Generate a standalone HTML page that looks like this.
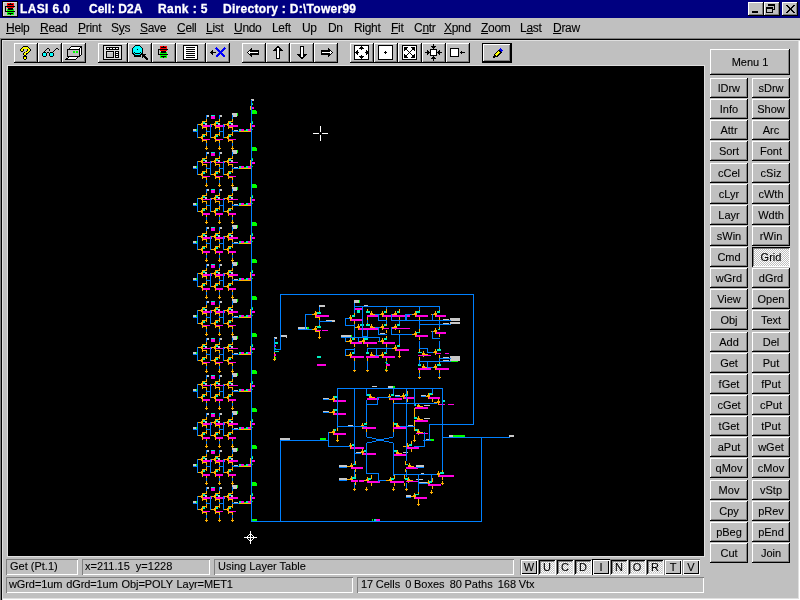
<!DOCTYPE html>
<html><head><meta charset="utf-8">
<style>
*{margin:0;padding:0;box-sizing:border-box}
html,body{width:800px;height:600px;overflow:hidden;background:#c0c0c0;font-family:"Liberation Sans",sans-serif;font-size:11px;color:#000}
.a{position:absolute}
.btn,.mi,.tt,.sb,.sm{will-change:transform}
.btn,.mi,.sb,.sm{-webkit-text-stroke:0.1px #000}
#title{left:0;top:0;width:800px;height:18px;background:#000080}
.tt{position:absolute;top:2px;color:#fff;font:bold 12px "Liberation Sans",sans-serif;white-space:pre;line-height:14px;-webkit-text-stroke:0.3px #fff}
.tb{position:absolute;top:2px;width:16px;height:14px;background:#c0c0c0;box-shadow:inset -1px -1px #000,inset 1px 1px #fff,inset -2px -2px #808080}
.mi{position:absolute;top:21px;white-space:pre;line-height:14px;font-size:12px;letter-spacing:-0.3px}
.mi u{text-decoration:underline 1px;text-underline-offset:1px}
#frame{left:0;top:38px;width:800px;height:562px;box-shadow:inset 1px 1px #808080,inset 2px 2px #000,inset 3px 3px #dfdfdf,inset -1px -1px #fff,inset -2px -2px #dfdfdf}
.btn{position:absolute;background:#c0c0c0;box-shadow:inset -1px -1px #000,inset 1px 1px #fff,inset -2px -2px #808080;text-align:center;white-space:pre}
.rb{width:38px;height:20px;line-height:21px}
.prs{background:conic-gradient(#fff 25%,#c0c0c0 0 50%,#fff 0 75%,#c0c0c0 0) 0 0/2px 2px;box-shadow:inset 1px 1px #000,inset -1px -1px #fff,inset 2px 2px #808080}
.sb{position:absolute;box-shadow:inset 1px 1px #808080,inset -1px -1px #fff;white-space:pre;line-height:14px;padding-left:4px}
.tbtn{position:absolute;top:43px;height:20px}
#canvas{left:8px;top:66px;width:696px;height:490px;background:#000;overflow:hidden;box-shadow:0 0 0 1px #dfdfdf}
.sm{position:absolute;top:559px;width:18px;height:16px;line-height:17px;text-align:center;background:#c0c0c0}
.smr{box-shadow:inset 1px 1px #808080,inset -1px -1px #fff,inset 2px 2px #fff,inset -2px -2px #000}
.smi{box-shadow:inset 1px 1px #000,inset -1px -1px #fff,inset 2px 2px #fff,inset -2px -2px #000}
.smp{background:conic-gradient(#fff 25%,#c0c0c0 0 50%,#fff 0 75%,#c0c0c0 0) 0 0/2px 2px;box-shadow:inset 1px 1px #808080,inset -1px -1px #fff,inset 2px 2px #000,inset -2px -2px #dfdfdf,inset 3px 3px #808080}
</style></head><body>
<div id="title" class="a">
  
  <span class="tt" style="left:20px;letter-spacing:0.35px">LASI 6.0</span>
  <span class="tt" style="left:89px">Cell: D2A</span>
  <span class="tt" style="left:158px;letter-spacing:0.4px">Rank : 5</span>
  <span class="tt" style="left:223px;letter-spacing:0.28px">Directory : D:\Tower99</span>
  <div class="tb" style="left:748px"></div>
  <div class="tb" style="left:764px"></div>
  <div class="tb" style="left:782px"></div>
</div>
<!-- menu -->
<span class="mi" style="left:6px"><u>H</u>elp</span>
<span class="mi" style="left:40px"><u>R</u>ead</span>
<span class="mi" style="left:78px"><u>P</u>rint</span>
<span class="mi" style="left:111px">S<u>y</u>s</span>
<span class="mi" style="left:140px"><u>S</u>ave</span>
<span class="mi" style="left:177px"><u>C</u>ell</span>
<span class="mi" style="left:206px"><u>L</u>ist</span>
<span class="mi" style="left:234px"><u>U</u>ndo</span>
<span class="mi" style="left:272px">Left</span>
<span class="mi" style="left:302px">Up</span>
<span class="mi" style="left:328px">Dn</span>
<span class="mi" style="left:354px">Right</span>
<span class="mi" style="left:391px"><u>F</u>it</span>
<span class="mi" style="left:414px">C<u>n</u>tr</span>
<span class="mi" style="left:444px"><u>X</u>pnd</span>
<span class="mi" style="left:481px"><u>Z</u>oom</span>
<span class="mi" style="left:520px">L<u>a</u>st</span>
<span class="mi" style="left:553px"><u>D</u>raw</span>

<div id="frame" class="a"></div>

<!-- toolbar -->
<div class="btn tbtn" style="left:14px;width:24px"></div>
<div class="btn tbtn" style="left:38px;width:24px"></div>
<div class="btn tbtn" style="left:62px;width:24px"></div>
<div class="btn tbtn" style="left:98px;width:30px"></div>
<div class="btn tbtn" style="left:128px;width:24px"></div>
<div class="btn tbtn" style="left:152px;width:24px"></div>
<div class="btn tbtn" style="left:176px;width:30px"></div>
<div class="btn tbtn" style="left:206px;width:24px"></div>
<div class="btn tbtn" style="left:242px;width:24px"></div>
<div class="btn tbtn" style="left:266px;width:24px"></div>
<div class="btn tbtn" style="left:290px;width:24px"></div>
<div class="btn tbtn" style="left:314px;width:24px"></div>
<div class="btn tbtn" style="left:350px;width:24px"></div>
<div class="btn tbtn" style="left:374px;width:24px"></div>
<div class="btn tbtn" style="left:398px;width:24px"></div>
<div class="btn tbtn" style="left:422px;width:24px"></div>
<div class="btn tbtn" style="left:446px;width:24px"></div>
<div class="btn tbtn" style="left:482px;width:30px;box-shadow:inset 0 0 0 1px #000,inset -2px -2px #000,inset 2px 2px #fff,inset -3px -3px #808080"></div>

<div id="canvas" class="a"></div>
<!--CANVAS--><svg class="a" style="left:0;top:0" width="800" height="600" shape-rendering="crispEdges">
<defs><clipPath id="cc"><rect x="8" y="66" width="696" height="490"/></clipPath></defs><g clip-path="url(#cc)">
<path fill="#ffb000" d="M202 121h1v8h-1zM201 123h1v3h-1zM202 121h5v1h-5zM202 127h5v1h-5zM206 119h1v2h-1zM206 128h1v2h-1zM198 124h4v1h-4zM206 128h1v2h-1zM206 132h1v4h-1zM202 134h1v8h-1zM201 136h1v3h-1zM202 134h5v1h-5zM202 140h5v1h-5zM206 141h1v2h-1zM198 137h4v1h-4zM206 146h1v4h-1zM205 148h3v1h-3zM215 121h1v8h-1zM214 123h1v3h-1zM215 121h5v1h-5zM215 127h5v1h-5zM219 119h1v2h-1zM219 128h1v2h-1zM211 124h4v1h-4zM219 128h1v2h-1zM219 132h1v4h-1zM215 134h1v8h-1zM214 136h1v3h-1zM215 134h5v1h-5zM215 140h5v1h-5zM219 141h1v2h-1zM211 137h4v1h-4zM219 146h1v4h-1zM218 148h3v1h-3zM228 121h1v8h-1zM227 123h1v3h-1zM228 121h5v1h-5zM228 127h5v1h-5zM232 119h1v2h-1zM232 128h1v2h-1zM224 124h4v1h-4zM232 128h1v2h-1zM232 132h1v4h-1zM228 134h1v8h-1zM227 136h1v3h-1zM228 134h5v1h-5zM228 140h5v1h-5zM232 141h1v2h-1zM224 137h4v1h-4zM232 146h1v4h-1zM231 148h3v1h-3zM238 131h14v1h-14zM250 123h1v6h-1zM202 158h1v8h-1zM201 160h1v3h-1zM202 158h5v1h-5zM202 164h5v1h-5zM206 156h1v2h-1zM206 165h1v2h-1zM198 161h4v1h-4zM206 165h1v2h-1zM206 169h1v4h-1zM202 171h1v8h-1zM201 173h1v3h-1zM202 171h5v1h-5zM202 177h5v1h-5zM206 178h1v2h-1zM198 174h4v1h-4zM206 183h1v4h-1zM205 185h3v1h-3zM215 158h1v8h-1zM214 160h1v3h-1zM215 158h5v1h-5zM215 164h5v1h-5zM219 156h1v2h-1zM219 165h1v2h-1zM211 161h4v1h-4zM219 165h1v2h-1zM219 169h1v4h-1zM215 171h1v8h-1zM214 173h1v3h-1zM215 171h5v1h-5zM215 177h5v1h-5zM219 178h1v2h-1zM211 174h4v1h-4zM219 183h1v4h-1zM218 185h3v1h-3zM228 158h1v8h-1zM227 160h1v3h-1zM228 158h5v1h-5zM228 164h5v1h-5zM232 156h1v2h-1zM232 165h1v2h-1zM224 161h4v1h-4zM232 165h1v2h-1zM232 169h1v4h-1zM228 171h1v8h-1zM227 173h1v3h-1zM228 171h5v1h-5zM228 177h5v1h-5zM232 178h1v2h-1zM224 174h4v1h-4zM232 183h1v4h-1zM231 185h3v1h-3zM238 168h14v1h-14zM250 160h1v6h-1zM202 195h1v8h-1zM201 197h1v3h-1zM202 195h5v1h-5zM202 201h5v1h-5zM206 193h1v2h-1zM206 202h1v2h-1zM198 198h4v1h-4zM206 202h1v2h-1zM206 206h1v4h-1zM202 208h1v8h-1zM201 210h1v3h-1zM202 208h5v1h-5zM202 214h5v1h-5zM206 215h1v2h-1zM198 211h4v1h-4zM206 220h1v4h-1zM205 222h3v1h-3zM215 195h1v8h-1zM214 197h1v3h-1zM215 195h5v1h-5zM215 201h5v1h-5zM219 193h1v2h-1zM219 202h1v2h-1zM211 198h4v1h-4zM219 202h1v2h-1zM219 206h1v4h-1zM215 208h1v8h-1zM214 210h1v3h-1zM215 208h5v1h-5zM215 214h5v1h-5zM219 215h1v2h-1zM211 211h4v1h-4zM219 220h1v4h-1zM218 222h3v1h-3zM228 195h1v8h-1zM227 197h1v3h-1zM228 195h5v1h-5zM228 201h5v1h-5zM232 193h1v2h-1zM232 202h1v2h-1zM224 198h4v1h-4zM232 202h1v2h-1zM232 206h1v4h-1zM228 208h1v8h-1zM227 210h1v3h-1zM228 208h5v1h-5zM228 214h5v1h-5zM232 215h1v2h-1zM224 211h4v1h-4zM232 220h1v4h-1zM231 222h3v1h-3zM238 205h14v1h-14zM250 197h1v6h-1zM202 233h1v8h-1zM201 235h1v3h-1zM202 233h5v1h-5zM202 239h5v1h-5zM206 231h1v2h-1zM206 240h1v2h-1zM198 236h4v1h-4zM206 240h1v2h-1zM206 244h1v4h-1zM202 246h1v8h-1zM201 248h1v3h-1zM202 246h5v1h-5zM202 252h5v1h-5zM206 253h1v2h-1zM198 249h4v1h-4zM206 258h1v4h-1zM205 260h3v1h-3zM215 233h1v8h-1zM214 235h1v3h-1zM215 233h5v1h-5zM215 239h5v1h-5zM219 231h1v2h-1zM219 240h1v2h-1zM211 236h4v1h-4zM219 240h1v2h-1zM219 244h1v4h-1zM215 246h1v8h-1zM214 248h1v3h-1zM215 246h5v1h-5zM215 252h5v1h-5zM219 253h1v2h-1zM211 249h4v1h-4zM219 258h1v4h-1zM218 260h3v1h-3zM228 233h1v8h-1zM227 235h1v3h-1zM228 233h5v1h-5zM228 239h5v1h-5zM232 231h1v2h-1zM232 240h1v2h-1zM224 236h4v1h-4zM232 240h1v2h-1zM232 244h1v4h-1zM228 246h1v8h-1zM227 248h1v3h-1zM228 246h5v1h-5zM228 252h5v1h-5zM232 253h1v2h-1zM224 249h4v1h-4zM232 258h1v4h-1zM231 260h3v1h-3zM238 243h14v1h-14zM250 235h1v6h-1zM202 270h1v8h-1zM201 272h1v3h-1zM202 270h5v1h-5zM202 276h5v1h-5zM206 268h1v2h-1zM206 277h1v2h-1zM198 273h4v1h-4zM206 277h1v2h-1zM206 281h1v4h-1zM202 283h1v8h-1zM201 285h1v3h-1zM202 283h5v1h-5zM202 289h5v1h-5zM206 290h1v2h-1zM198 286h4v1h-4zM206 295h1v4h-1zM205 297h3v1h-3zM215 270h1v8h-1zM214 272h1v3h-1zM215 270h5v1h-5zM215 276h5v1h-5zM219 268h1v2h-1zM219 277h1v2h-1zM211 273h4v1h-4zM219 277h1v2h-1zM219 281h1v4h-1zM215 283h1v8h-1zM214 285h1v3h-1zM215 283h5v1h-5zM215 289h5v1h-5zM219 290h1v2h-1zM211 286h4v1h-4zM219 295h1v4h-1zM218 297h3v1h-3zM228 270h1v8h-1zM227 272h1v3h-1zM228 270h5v1h-5zM228 276h5v1h-5zM232 268h1v2h-1zM232 277h1v2h-1zM224 273h4v1h-4zM232 277h1v2h-1zM232 281h1v4h-1zM228 283h1v8h-1zM227 285h1v3h-1zM228 283h5v1h-5zM228 289h5v1h-5zM232 290h1v2h-1zM224 286h4v1h-4zM232 295h1v4h-1zM231 297h3v1h-3zM238 280h14v1h-14zM250 272h1v6h-1zM202 307h1v8h-1zM201 309h1v3h-1zM202 307h5v1h-5zM202 313h5v1h-5zM206 305h1v2h-1zM206 314h1v2h-1zM198 310h4v1h-4zM206 314h1v2h-1zM206 318h1v4h-1zM202 320h1v8h-1zM201 322h1v3h-1zM202 320h5v1h-5zM202 326h5v1h-5zM206 327h1v2h-1zM198 323h4v1h-4zM206 332h1v4h-1zM205 334h3v1h-3zM215 307h1v8h-1zM214 309h1v3h-1zM215 307h5v1h-5zM215 313h5v1h-5zM219 305h1v2h-1zM219 314h1v2h-1zM211 310h4v1h-4zM219 314h1v2h-1zM219 318h1v4h-1zM215 320h1v8h-1zM214 322h1v3h-1zM215 320h5v1h-5zM215 326h5v1h-5zM219 327h1v2h-1zM211 323h4v1h-4zM219 332h1v4h-1zM218 334h3v1h-3zM228 307h1v8h-1zM227 309h1v3h-1zM228 307h5v1h-5zM228 313h5v1h-5zM232 305h1v2h-1zM232 314h1v2h-1zM224 310h4v1h-4zM232 314h1v2h-1zM232 318h1v4h-1zM228 320h1v8h-1zM227 322h1v3h-1zM228 320h5v1h-5zM228 326h5v1h-5zM232 327h1v2h-1zM224 323h4v1h-4zM232 332h1v4h-1zM231 334h3v1h-3zM238 317h14v1h-14zM250 309h1v6h-1zM202 344h1v8h-1zM201 346h1v3h-1zM202 344h5v1h-5zM202 350h5v1h-5zM206 342h1v2h-1zM206 351h1v2h-1zM198 347h4v1h-4zM206 351h1v2h-1zM206 355h1v4h-1zM202 357h1v8h-1zM201 359h1v3h-1zM202 357h5v1h-5zM202 363h5v1h-5zM206 364h1v2h-1zM198 360h4v1h-4zM206 369h1v4h-1zM205 371h3v1h-3zM215 344h1v8h-1zM214 346h1v3h-1zM215 344h5v1h-5zM215 350h5v1h-5zM219 342h1v2h-1zM219 351h1v2h-1zM211 347h4v1h-4zM219 351h1v2h-1zM219 355h1v4h-1zM215 357h1v8h-1zM214 359h1v3h-1zM215 357h5v1h-5zM215 363h5v1h-5zM219 364h1v2h-1zM211 360h4v1h-4zM219 369h1v4h-1zM218 371h3v1h-3zM228 344h1v8h-1zM227 346h1v3h-1zM228 344h5v1h-5zM228 350h5v1h-5zM232 342h1v2h-1zM232 351h1v2h-1zM224 347h4v1h-4zM232 351h1v2h-1zM232 355h1v4h-1zM228 357h1v8h-1zM227 359h1v3h-1zM228 357h5v1h-5zM228 363h5v1h-5zM232 364h1v2h-1zM224 360h4v1h-4zM232 369h1v4h-1zM231 371h3v1h-3zM238 354h14v1h-14zM250 346h1v6h-1zM202 381h1v8h-1zM201 383h1v3h-1zM202 381h5v1h-5zM202 387h5v1h-5zM206 379h1v2h-1zM206 388h1v2h-1zM198 384h4v1h-4zM206 388h1v2h-1zM206 392h1v4h-1zM202 394h1v8h-1zM201 396h1v3h-1zM202 394h5v1h-5zM202 400h5v1h-5zM206 401h1v2h-1zM198 397h4v1h-4zM206 406h1v4h-1zM205 408h3v1h-3zM215 381h1v8h-1zM214 383h1v3h-1zM215 381h5v1h-5zM215 387h5v1h-5zM219 379h1v2h-1zM219 388h1v2h-1zM211 384h4v1h-4zM219 388h1v2h-1zM219 392h1v4h-1zM215 394h1v8h-1zM214 396h1v3h-1zM215 394h5v1h-5zM215 400h5v1h-5zM219 401h1v2h-1zM211 397h4v1h-4zM219 406h1v4h-1zM218 408h3v1h-3zM228 381h1v8h-1zM227 383h1v3h-1zM228 381h5v1h-5zM228 387h5v1h-5zM232 379h1v2h-1zM232 388h1v2h-1zM224 384h4v1h-4zM232 388h1v2h-1zM232 392h1v4h-1zM228 394h1v8h-1zM227 396h1v3h-1zM228 394h5v1h-5zM228 400h5v1h-5zM232 401h1v2h-1zM224 397h4v1h-4zM232 406h1v4h-1zM231 408h3v1h-3zM238 391h14v1h-14zM250 383h1v6h-1zM202 419h1v8h-1zM201 421h1v3h-1zM202 419h5v1h-5zM202 425h5v1h-5zM206 417h1v2h-1zM206 426h1v2h-1zM198 422h4v1h-4zM206 426h1v2h-1zM206 430h1v4h-1zM202 432h1v8h-1zM201 434h1v3h-1zM202 432h5v1h-5zM202 438h5v1h-5zM206 439h1v2h-1zM198 435h4v1h-4zM206 444h1v4h-1zM205 446h3v1h-3zM215 419h1v8h-1zM214 421h1v3h-1zM215 419h5v1h-5zM215 425h5v1h-5zM219 417h1v2h-1zM219 426h1v2h-1zM211 422h4v1h-4zM219 426h1v2h-1zM219 430h1v4h-1zM215 432h1v8h-1zM214 434h1v3h-1zM215 432h5v1h-5zM215 438h5v1h-5zM219 439h1v2h-1zM211 435h4v1h-4zM219 444h1v4h-1zM218 446h3v1h-3zM228 419h1v8h-1zM227 421h1v3h-1zM228 419h5v1h-5zM228 425h5v1h-5zM232 417h1v2h-1zM232 426h1v2h-1zM224 422h4v1h-4zM232 426h1v2h-1zM232 430h1v4h-1zM228 432h1v8h-1zM227 434h1v3h-1zM228 432h5v1h-5zM228 438h5v1h-5zM232 439h1v2h-1zM224 435h4v1h-4zM232 444h1v4h-1zM231 446h3v1h-3zM238 429h14v1h-14zM250 421h1v6h-1zM202 456h1v8h-1zM201 458h1v3h-1zM202 456h5v1h-5zM202 462h5v1h-5zM206 454h1v2h-1zM206 463h1v2h-1zM198 459h4v1h-4zM206 463h1v2h-1zM206 467h1v4h-1zM202 469h1v8h-1zM201 471h1v3h-1zM202 469h5v1h-5zM202 475h5v1h-5zM206 476h1v2h-1zM198 472h4v1h-4zM206 481h1v4h-1zM205 483h3v1h-3zM215 456h1v8h-1zM214 458h1v3h-1zM215 456h5v1h-5zM215 462h5v1h-5zM219 454h1v2h-1zM219 463h1v2h-1zM211 459h4v1h-4zM219 463h1v2h-1zM219 467h1v4h-1zM215 469h1v8h-1zM214 471h1v3h-1zM215 469h5v1h-5zM215 475h5v1h-5zM219 476h1v2h-1zM211 472h4v1h-4zM219 481h1v4h-1zM218 483h3v1h-3zM228 456h1v8h-1zM227 458h1v3h-1zM228 456h5v1h-5zM228 462h5v1h-5zM232 454h1v2h-1zM232 463h1v2h-1zM224 459h4v1h-4zM232 463h1v2h-1zM232 467h1v4h-1zM228 469h1v8h-1zM227 471h1v3h-1zM228 469h5v1h-5zM228 475h5v1h-5zM232 476h1v2h-1zM224 472h4v1h-4zM232 481h1v4h-1zM231 483h3v1h-3zM238 466h14v1h-14zM250 458h1v6h-1zM202 493h1v8h-1zM201 495h1v3h-1zM202 493h5v1h-5zM202 499h5v1h-5zM206 491h1v2h-1zM206 500h1v2h-1zM198 496h4v1h-4zM206 500h1v2h-1zM206 504h1v4h-1zM202 506h1v8h-1zM201 508h1v3h-1zM202 506h5v1h-5zM202 512h5v1h-5zM206 513h1v2h-1zM198 509h4v1h-4zM206 518h1v4h-1zM205 520h3v1h-3zM215 493h1v8h-1zM214 495h1v3h-1zM215 493h5v1h-5zM215 499h5v1h-5zM219 491h1v2h-1zM219 500h1v2h-1zM211 496h4v1h-4zM219 500h1v2h-1zM219 504h1v4h-1zM215 506h1v8h-1zM214 508h1v3h-1zM215 506h5v1h-5zM215 512h5v1h-5zM219 513h1v2h-1zM211 509h4v1h-4zM219 518h1v4h-1zM218 520h3v1h-3zM228 493h1v8h-1zM227 495h1v3h-1zM228 493h5v1h-5zM228 499h5v1h-5zM232 491h1v2h-1zM232 500h1v2h-1zM224 496h4v1h-4zM232 500h1v2h-1zM232 504h1v4h-1zM228 506h1v8h-1zM227 508h1v3h-1zM228 506h5v1h-5zM228 512h5v1h-5zM232 513h1v2h-1zM224 509h4v1h-4zM232 518h1v4h-1zM231 520h3v1h-3zM238 503h14v1h-14zM250 495h1v6h-1zM250 106h1v4h-1zM274 344h1v1h-1zM274 352h1v2h-1zM274 356h1v1h-1zM274 357h1v4h-1zM273 359h3v1h-3zM319 310h1v2h-1zM319 334h1v2h-1zM319 335h1v4h-1zM318 337h3v1h-3zM386 366h1v3h-1zM315 311h1v6h-1zM314 313h3v2h-3zM311 314h4v1h-4zM319 309h1v4h-1zM319 317h1v4h-1zM315 326h1v6h-1zM314 328h3v2h-3zM311 329h4v1h-4zM319 324h1v3h-1zM319 332h1v5h-1zM315 312h5v1h-5zM315 317h5v1h-5zM315 326h5v1h-5zM315 331h5v1h-5zM350 315h1v6h-1zM349 317h3v2h-3zM346 318h4v1h-4zM354 313h1v4h-1zM354 321h1v3h-1zM371 311h1v6h-1zM370 313h3v2h-3zM372 314h4v1h-4zM367 309h1v4h-1zM367 317h1v3h-1zM382 311h1v6h-1zM381 313h3v2h-3zM378 314h4v1h-4zM386 309h1v4h-1zM386 317h1v3h-1zM395 311h1v6h-1zM394 313h3v2h-3zM391 314h4v1h-4zM399 309h1v4h-1zM399 317h1v3h-1zM415 311h1v6h-1zM414 313h3v2h-3zM411 314h4v1h-4zM419 309h1v4h-1zM419 317h1v3h-1zM435 311h1v6h-1zM434 313h3v2h-3zM431 314h4v1h-4zM439 309h1v4h-1zM439 317h1v3h-1zM358 324h1v6h-1zM357 326h3v2h-3zM354 327h4v1h-4zM362 322h1v4h-1zM362 330h1v3h-1zM371 324h1v6h-1zM370 326h3v2h-3zM372 327h4v1h-4zM367 322h1v4h-1zM367 330h1v3h-1zM382 324h1v6h-1zM381 326h3v2h-3zM378 327h4v1h-4zM386 322h1v4h-1zM386 330h1v3h-1zM395 324h1v6h-1zM394 326h3v2h-3zM391 327h4v1h-4zM399 322h1v4h-1zM399 330h1v3h-1zM415 331h1v6h-1zM414 333h3v2h-3zM411 334h4v1h-4zM419 329h1v4h-1zM419 337h1v3h-1zM435 328h1v6h-1zM434 330h3v2h-3zM431 331h4v1h-4zM439 326h1v4h-1zM439 334h1v3h-1zM350 338h1v6h-1zM349 340h3v2h-3zM346 341h4v1h-4zM354 336h1v4h-1zM354 344h1v3h-1zM363 338h1v6h-1zM362 340h3v2h-3zM359 341h4v1h-4zM367 336h1v4h-1zM367 344h1v3h-1zM382 338h1v6h-1zM381 340h3v2h-3zM378 341h4v1h-4zM386 336h1v4h-1zM386 344h1v3h-1zM395 345h1v6h-1zM394 347h3v2h-3zM391 348h4v1h-4zM399 343h1v4h-1zM399 351h1v5h-1zM350 352h1v6h-1zM349 354h3v2h-3zM346 355h4v1h-4zM354 350h1v4h-1zM354 358h1v3h-1zM371 352h1v6h-1zM370 354h3v2h-3zM372 355h4v1h-4zM367 350h1v4h-1zM367 358h1v3h-1zM382 352h1v6h-1zM381 354h3v2h-3zM378 355h4v1h-4zM386 350h1v4h-1zM386 358h1v3h-1zM423 351h1v6h-1zM422 353h3v2h-3zM424 354h4v1h-4zM419 349h1v4h-1zM419 357h1v3h-1zM435 349h1v6h-1zM434 351h3v2h-3zM431 352h4v1h-4zM439 347h1v4h-1zM439 355h1v3h-1zM423 364h1v6h-1zM422 366h3v2h-3zM424 367h4v1h-4zM419 362h1v4h-1zM419 370h1v3h-1zM435 364h1v6h-1zM434 366h3v2h-3zM431 367h4v1h-4zM439 362h1v4h-1zM439 370h1v3h-1zM354 368h1v4h-1zM353 370h3v1h-3zM367 368h1v4h-1zM366 370h3v1h-3zM386 368h1v4h-1zM385 370h3v1h-3zM419 375h1v4h-1zM418 377h3v1h-3zM439 375h1v4h-1zM438 377h3v1h-3zM399 354h1v4h-1zM398 356h3v1h-3zM414 408h1v9h-1zM414 420h1v9h-1zM393 421h1v8h-1zM333 396h1v6h-1zM332 398h3v2h-3zM329 399h4v1h-4zM337 394h1v4h-1zM337 402h1v3h-1zM333 409h1v6h-1zM332 411h3v2h-3zM329 412h4v1h-4zM337 407h1v4h-1zM337 415h1v3h-1zM333 429h1v6h-1zM332 431h3v2h-3zM329 432h4v1h-4zM337 427h1v4h-1zM337 435h1v3h-1zM350 443h1v6h-1zM349 445h3v2h-3zM346 446h4v1h-4zM354 441h1v4h-1zM354 449h1v3h-1zM362 449h1v6h-1zM361 451h3v2h-3zM358 452h4v1h-4zM366 447h1v4h-1zM366 455h1v3h-1zM370 394h1v6h-1zM369 396h3v2h-3zM371 397h4v1h-4zM366 392h1v4h-1zM366 400h1v3h-1zM362 423h1v6h-1zM361 425h3v2h-3zM358 426h4v1h-4zM366 421h1v4h-1zM366 429h1v3h-1zM389 394h1v6h-1zM388 396h3v2h-3zM385 397h4v1h-4zM393 392h1v4h-1zM393 400h1v3h-1zM403 393h1v6h-1zM402 395h3v2h-3zM399 396h4v1h-4zM407 391h1v4h-1zM407 399h1v3h-1zM428 393h1v6h-1zM427 395h3v2h-3zM424 396h4v1h-4zM432 391h1v4h-1zM432 399h1v3h-1zM438 399h1v6h-1zM437 401h3v2h-3zM434 402h4v1h-4zM442 397h1v4h-1zM442 405h1v3h-1zM418 403h1v6h-1zM417 405h3v2h-3zM419 406h4v1h-4zM414 401h1v4h-1zM414 409h1v3h-1zM418 416h1v6h-1zM417 418h3v2h-3zM419 419h4v1h-4zM414 414h1v4h-1zM414 422h1v3h-1zM418 429h1v6h-1zM417 431h3v2h-3zM419 432h4v1h-4zM414 427h1v4h-1zM414 435h1v3h-1zM397 423h1v6h-1zM396 425h3v2h-3zM398 426h4v1h-4zM393 421h1v4h-1zM393 429h1v3h-1zM397 450h1v6h-1zM396 452h3v2h-3zM398 453h4v1h-4zM393 448h1v4h-1zM393 456h1v3h-1zM407 443h1v6h-1zM406 445h3v2h-3zM403 446h4v1h-4zM411 441h1v4h-1zM411 449h1v3h-1zM351 463h1v6h-1zM350 465h3v2h-3zM347 466h4v1h-4zM355 461h1v4h-1zM355 469h1v3h-1zM351 476h1v6h-1zM350 478h3v2h-3zM347 479h4v1h-4zM355 474h1v4h-1zM355 482h1v3h-1zM367 477h1v6h-1zM366 479h3v2h-3zM363 480h4v1h-4zM371 475h1v4h-1zM371 483h1v3h-1zM390 477h1v6h-1zM389 479h3v2h-3zM386 480h4v1h-4zM394 475h1v4h-1zM394 483h1v3h-1zM408 477h1v6h-1zM407 479h3v2h-3zM409 480h4v1h-4zM404 475h1v4h-1zM404 483h1v3h-1zM409 463h1v6h-1zM408 465h3v2h-3zM410 466h4v1h-4zM405 461h1v4h-1zM405 469h1v3h-1zM438 471h1v6h-1zM437 473h3v2h-3zM434 474h4v1h-4zM442 469h1v4h-1zM442 477h1v3h-1zM428 480h1v6h-1zM427 482h3v2h-3zM424 483h4v1h-4zM432 478h1v4h-1zM432 486h1v3h-1zM414 493h1v6h-1zM413 495h3v2h-3zM410 496h4v1h-4zM418 491h1v4h-1zM418 499h1v3h-1zM337 438h1v4h-1zM336 440h3v1h-3zM354 487h1v4h-1zM353 489h3v1h-3zM366 487h1v4h-1zM365 489h3v1h-3zM393 487h1v4h-1zM392 489h3v1h-3zM406 487h1v4h-1zM405 489h3v1h-3zM442 481h1v4h-1zM441 483h3v1h-3zM431 490h1v4h-1zM430 492h3v1h-3zM418 502h1v4h-1zM417 504h3v1h-3zM414 438h1v4h-1zM413 440h3v1h-3zM372 521h8v1h-8z"/>
<path fill="#ff00e0" d="M203 125h9v2h-9zM203 139h7v1h-7zM216 125h9v2h-9zM216 139h7v1h-7zM229 125h9v2h-9zM229 139h7v1h-7zM211 116h4v3h-4zM241 129h3v2h-3zM248 129h3v2h-3zM251 125h4v2h-4zM203 162h9v1h-9zM203 176h7v1h-7zM216 162h9v1h-9zM216 176h7v1h-7zM229 162h9v1h-9zM229 176h7v1h-7zM211 153h4v3h-4zM241 166h3v2h-3zM248 166h3v2h-3zM251 162h4v2h-4zM203 199h9v1h-9zM203 213h7v2h-7zM216 199h9v1h-9zM216 213h7v2h-7zM229 199h9v1h-9zM229 213h7v2h-7zM211 190h4v3h-4zM241 203h3v2h-3zM248 203h3v2h-3zM251 199h4v2h-4zM203 237h9v2h-9zM203 251h7v2h-7zM216 237h9v2h-9zM216 251h7v2h-7zM229 237h9v2h-9zM229 251h7v2h-7zM211 228h4v3h-4zM241 241h3v2h-3zM248 241h3v2h-3zM251 237h4v2h-4zM203 274h9v2h-9zM203 288h7v2h-7zM216 274h9v2h-9zM216 288h7v2h-7zM229 274h9v2h-9zM229 288h7v2h-7zM211 265h4v3h-4zM241 278h3v2h-3zM248 278h3v2h-3zM251 274h4v2h-4zM203 311h9v2h-9zM203 325h7v1h-7zM216 311h9v2h-9zM216 325h7v1h-7zM229 311h9v2h-9zM229 325h7v1h-7zM211 302h4v3h-4zM241 315h3v2h-3zM248 315h3v2h-3zM251 311h4v2h-4zM203 348h9v1h-9zM203 362h7v1h-7zM216 348h9v1h-9zM216 362h7v1h-7zM229 348h9v1h-9zM229 362h7v1h-7zM211 339h4v3h-4zM241 352h3v2h-3zM248 352h3v2h-3zM251 348h4v2h-4zM203 385h9v1h-9zM203 399h7v2h-7zM216 385h9v1h-9zM216 399h7v2h-7zM229 385h9v1h-9zM229 399h7v2h-7zM211 376h4v3h-4zM241 389h3v2h-3zM248 389h3v2h-3zM251 385h4v2h-4zM203 423h9v2h-9zM203 437h7v2h-7zM216 423h9v2h-9zM216 437h7v2h-7zM229 423h9v2h-9zM229 437h7v2h-7zM211 414h4v3h-4zM241 427h3v2h-3zM248 427h3v2h-3zM251 423h4v2h-4zM203 460h9v2h-9zM203 474h7v2h-7zM216 460h9v2h-9zM216 474h7v2h-7zM229 460h9v2h-9zM229 474h7v2h-7zM211 451h4v3h-4zM241 464h3v2h-3zM248 464h3v2h-3zM251 460h4v2h-4zM203 497h9v2h-9zM203 511h7v1h-7zM216 497h9v2h-9zM216 511h7v1h-7zM229 497h9v2h-9zM229 511h7v1h-7zM211 488h4v3h-4zM241 501h3v2h-3zM248 501h3v2h-3zM251 497h4v2h-4zM251 107h3v2h-3zM274 345h2v2h-2zM274 354h2v2h-2zM322 330h6v1h-6zM317 364h9v2h-9zM355 308h8v2h-8zM386 364h4v2h-4zM406 315h3v2h-3zM405 328h3v1h-3zM405 349h3v2h-3zM316 315h13v2h-13zM316 330h5v1h-5zM351 319h12v2h-12zM367 315h12v2h-12zM383 315h8v2h-8zM392 315h18v2h-18zM416 315h12v2h-12zM436 315h10v2h-10zM359 328h12v2h-12zM367 328h11v2h-11zM383 328h6v1h-6zM392 328h18v1h-18zM416 335h12v2h-12zM436 332h10v2h-10zM351 342h11v2h-11zM364 342h13v2h-13zM383 342h12v2h-12zM396 349h13v2h-13zM351 356h13v2h-13zM366 356h13v2h-13zM383 356h12v2h-12zM418 355h13v1h-13zM436 353h5v1h-5zM445 353h4v1h-4zM418 368h13v2h-13zM436 368h13v2h-13zM410 447h9v2h-9zM410 467h8v2h-8zM334 400h12v2h-12zM334 413h12v2h-12zM334 433h12v2h-12zM351 447h13v2h-13zM363 453h13v2h-13zM367 398h12v2h-12zM363 427h13v2h-13zM390 398h12v2h-12zM404 397h11v2h-11zM429 397h11v2h-11zM439 404h6v1h-6zM448 404h4v1h-4zM452 404h2v1h-2zM415 407h13v2h-13zM415 420h13v2h-13zM416 433h12v1h-12zM393 427h14v2h-14zM393 454h13v2h-13zM406 447h12v2h-12zM351 467h12v2h-12zM351 480h7v2h-7zM359 480h5v2h-5zM367 481h13v2h-13zM390 481h14v2h-14zM406 481h8v1h-8zM414 481h5v1h-5zM406 467h12v2h-12zM439 475h15v2h-15zM428 484h13v2h-13zM415 497h12v2h-12zM376 519h4v2h-4z"/>
<path fill="#00f0c0" d="M203 122h2v2h-2zM203 135h2v2h-2zM216 122h2v2h-2zM216 135h2v2h-2zM229 122h2v2h-2zM229 135h2v2h-2zM211 115h4v1h-4zM239 129h2v2h-2zM246 129h2v2h-2zM251 122h2v2h-2zM203 159h2v2h-2zM203 172h2v2h-2zM216 159h2v2h-2zM216 172h2v2h-2zM229 159h2v2h-2zM229 172h2v2h-2zM211 152h4v1h-4zM239 166h2v2h-2zM246 166h2v2h-2zM251 159h2v2h-2zM203 196h2v2h-2zM203 209h2v2h-2zM216 196h2v2h-2zM216 209h2v2h-2zM229 196h2v2h-2zM229 209h2v2h-2zM211 189h4v1h-4zM239 203h2v2h-2zM246 203h2v2h-2zM251 196h2v2h-2zM203 234h2v2h-2zM203 247h2v2h-2zM216 234h2v2h-2zM216 247h2v2h-2zM229 234h2v2h-2zM229 247h2v2h-2zM211 227h4v1h-4zM239 241h2v2h-2zM246 241h2v2h-2zM251 234h2v2h-2zM203 271h2v2h-2zM203 284h2v2h-2zM216 271h2v2h-2zM216 284h2v2h-2zM229 271h2v2h-2zM229 284h2v2h-2zM211 264h4v1h-4zM239 278h2v2h-2zM246 278h2v2h-2zM251 271h2v2h-2zM203 308h2v2h-2zM203 321h2v2h-2zM216 308h2v2h-2zM216 321h2v2h-2zM229 308h2v2h-2zM229 321h2v2h-2zM211 301h4v1h-4zM239 315h2v2h-2zM246 315h2v2h-2zM251 308h2v2h-2zM203 345h2v2h-2zM203 358h2v2h-2zM216 345h2v2h-2zM216 358h2v2h-2zM229 345h2v2h-2zM229 358h2v2h-2zM211 338h4v1h-4zM239 352h2v2h-2zM246 352h2v2h-2zM251 345h2v2h-2zM203 382h2v2h-2zM203 395h2v2h-2zM216 382h2v2h-2zM216 395h2v2h-2zM229 382h2v2h-2zM229 395h2v2h-2zM211 375h4v1h-4zM239 389h2v2h-2zM246 389h2v2h-2zM251 382h2v2h-2zM203 420h2v2h-2zM203 433h2v2h-2zM216 420h2v2h-2zM216 433h2v2h-2zM229 420h2v2h-2zM229 433h2v2h-2zM211 413h4v1h-4zM239 427h2v2h-2zM246 427h2v2h-2zM251 420h2v2h-2zM203 457h2v2h-2zM203 470h2v2h-2zM216 457h2v2h-2zM216 470h2v2h-2zM229 457h2v2h-2zM229 470h2v2h-2zM211 450h4v1h-4zM239 464h2v2h-2zM246 464h2v2h-2zM251 457h2v2h-2zM203 494h2v2h-2zM203 507h2v2h-2zM216 494h2v2h-2zM216 507h2v2h-2zM229 494h2v2h-2zM229 507h2v2h-2zM211 487h4v1h-4zM239 501h2v2h-2zM246 501h2v2h-2zM251 494h2v2h-2zM251 103h2v2h-2zM274 342h4v2h-4zM275 351h4v1h-4zM317 356h4v2h-4zM357 310h3v3h-3zM386 363h2v1h-2zM317 312h4v2h-4zM317 326h4v2h-4zM352 315h3v2h-3zM366 311h4v2h-4zM384 311h2v2h-2zM397 311h2v2h-2zM416 311h4v2h-4zM437 311h3v2h-3zM360 324h4v2h-4zM366 324h4v2h-4zM384 324h2v2h-2zM397 324h3v2h-3zM416 332h4v1h-4zM438 329h2v1h-2zM352 338h2v2h-2zM364 338h4v2h-4zM384 338h3v2h-3zM397 345h3v2h-3zM352 352h3v2h-3zM366 352h3v2h-3zM384 352h2v2h-2zM418 352h4v1h-4zM437 349h4v2h-4zM418 364h3v2h-3zM437 364h4v2h-4zM334 396h3v2h-3zM334 409h3v2h-3zM334 429h2v2h-2zM352 444h3v2h-3zM364 450h3v2h-3zM367 394h3v2h-3zM364 423h3v2h-3zM391 394h3v2h-3zM405 394h3v2h-3zM429 393h3v2h-3zM442 400h3v2h-3zM414 404h2v2h-2zM414 417h3v2h-3zM415 429h3v2h-3zM394 423h3v2h-3zM394 450h3v2h-3zM409 444h3v2h-3zM353 464h3v1h-3zM352 477h4v2h-4zM368 478h3v2h-3zM391 478h3v2h-3zM405 478h3v2h-3zM406 464h2v1h-2zM440 472h4v2h-4zM429 481h3v2h-3zM415 494h4v1h-4zM374 519h2v2h-2z"/>
<path fill="#c8c8c8" d="M193 129h3v2h-3zM207 115h2v2h-2zM205 123h2v2h-2zM220 115h2v2h-2zM218 123h2v2h-2zM233 115h2v2h-2zM231 123h2v2h-2zM232 113h5v4h-5zM234 130h4v1h-4zM193 166h3v2h-3zM207 152h2v2h-2zM205 160h2v2h-2zM220 152h2v2h-2zM218 160h2v2h-2zM233 152h2v2h-2zM231 160h2v2h-2zM232 150h5v4h-5zM234 167h4v1h-4zM193 203h3v2h-3zM207 189h2v2h-2zM205 197h2v2h-2zM220 189h2v2h-2zM218 197h2v2h-2zM233 189h2v2h-2zM231 197h2v2h-2zM232 187h5v4h-5zM234 204h4v1h-4zM193 241h3v2h-3zM207 227h2v2h-2zM205 235h2v2h-2zM220 227h2v2h-2zM218 235h2v2h-2zM233 227h2v2h-2zM231 235h2v2h-2zM232 225h5v4h-5zM234 242h4v1h-4zM193 278h3v2h-3zM207 264h2v2h-2zM205 272h2v2h-2zM220 264h2v2h-2zM218 272h2v2h-2zM233 264h2v2h-2zM231 272h2v2h-2zM232 262h5v4h-5zM234 279h4v1h-4zM193 315h3v2h-3zM207 301h2v2h-2zM205 309h2v2h-2zM220 301h2v2h-2zM218 309h2v2h-2zM233 301h2v2h-2zM231 309h2v2h-2zM232 299h5v4h-5zM234 316h4v1h-4zM193 352h3v2h-3zM207 338h2v2h-2zM205 346h2v2h-2zM220 338h2v2h-2zM218 346h2v2h-2zM233 338h2v2h-2zM231 346h2v2h-2zM232 336h5v4h-5zM234 353h4v1h-4zM193 389h3v2h-3zM207 375h2v2h-2zM205 383h2v2h-2zM220 375h2v2h-2zM218 383h2v2h-2zM233 375h2v2h-2zM231 383h2v2h-2zM232 373h5v4h-5zM234 390h4v1h-4zM193 427h3v2h-3zM207 413h2v2h-2zM205 421h2v2h-2zM220 413h2v2h-2zM218 421h2v2h-2zM233 413h2v2h-2zM231 421h2v2h-2zM232 411h5v4h-5zM234 428h4v1h-4zM193 464h3v2h-3zM207 450h2v2h-2zM205 458h2v2h-2zM220 450h2v2h-2zM218 458h2v2h-2zM233 450h2v2h-2zM231 458h2v2h-2zM232 448h5v4h-5zM234 465h4v1h-4zM193 501h3v2h-3zM207 487h2v2h-2zM205 495h2v2h-2zM220 487h2v2h-2zM218 495h2v2h-2zM233 487h2v2h-2zM231 495h2v2h-2zM232 485h5v4h-5zM234 502h4v1h-4zM251 99h3v2h-3zM274 337h3v2h-3zM281 335h6v2h-6zM286 337h1v1h-1zM319 305h6v2h-6zM326 320h9v2h-9zM298 327h9v2h-9zM354 300h5v3h-5zM364 305h4v1h-4zM380 320h5v1h-5zM380 333h5v1h-5zM341 335h10v2h-10zM443 319h6v1h-6zM450 318h10v3h-10zM443 323h6v1h-6zM450 322h10v2h-10zM443 357h6v1h-6zM443 360h6v1h-6zM450 356h10v5h-10zM372 386h5v1h-5zM388 386h5v2h-5zM348 425h5v1h-5zM280 438h10v2h-10zM408 425h5v1h-5zM426 439h4v2h-4zM449 435h4v2h-4zM509 435h5v2h-5zM323 398h6v1h-6zM323 411h6v1h-6zM395 395h5v1h-5zM421 395h5v1h-5zM424 405h6v1h-6zM424 418h6v1h-6zM356 452h5v1h-5zM403 452h5v1h-5zM339 465h8v2h-8zM339 478h8v2h-8zM416 465h8v2h-8zM416 479h7v1h-7zM419 482h8v1h-8zM406 495h5v2h-5zM421 473h3v1h-3z"/>
<path fill="#00ff00" d="M196 129h1v2h-1zM237 113h1v3h-1zM244 130h2v1h-2zM252 129h1v1h-1zM252 121h1v1h-1zM252 110h4v4h-4zM256 111h1v3h-1zM196 166h1v2h-1zM237 150h1v3h-1zM244 167h2v1h-2zM252 166h1v1h-1zM252 158h1v1h-1zM252 147h4v4h-4zM256 148h1v3h-1zM196 203h1v2h-1zM237 187h1v3h-1zM244 204h2v1h-2zM252 203h1v1h-1zM252 195h1v1h-1zM252 184h4v4h-4zM256 185h1v3h-1zM196 241h1v2h-1zM237 225h1v3h-1zM244 242h2v1h-2zM252 241h1v1h-1zM252 233h1v1h-1zM252 222h4v4h-4zM256 223h1v3h-1zM196 278h1v2h-1zM237 262h1v3h-1zM244 279h2v1h-2zM252 278h1v1h-1zM252 270h1v1h-1zM252 259h4v4h-4zM256 260h1v3h-1zM196 315h1v2h-1zM237 299h1v3h-1zM244 316h2v1h-2zM252 315h1v1h-1zM252 307h1v1h-1zM252 296h4v4h-4zM256 297h1v3h-1zM196 352h1v2h-1zM237 336h1v3h-1zM244 353h2v1h-2zM252 352h1v1h-1zM252 344h1v1h-1zM252 333h4v4h-4zM256 334h1v3h-1zM196 389h1v2h-1zM237 373h1v3h-1zM244 390h2v1h-2zM252 389h1v1h-1zM252 381h1v1h-1zM252 370h4v4h-4zM256 371h1v3h-1zM196 427h1v2h-1zM237 411h1v3h-1zM244 428h2v1h-2zM252 427h1v1h-1zM252 419h1v1h-1zM252 408h4v4h-4zM256 409h1v3h-1zM196 464h1v2h-1zM237 448h1v3h-1zM244 465h2v1h-2zM252 464h1v1h-1zM252 456h1v1h-1zM252 445h4v4h-4zM256 446h1v3h-1zM196 501h1v2h-1zM237 485h1v3h-1zM244 502h2v1h-2zM252 501h1v1h-1zM252 493h1v1h-1zM252 482h4v4h-4zM256 483h1v3h-1zM252 103h1v1h-1zM252 519h5v2h-5zM275 348h1v1h-1zM275 357h1v2h-1zM307 327h2v2h-2zM359 300h1v3h-1zM351 335h1v2h-1zM451 361h7v1h-7zM385 362h1v1h-1zM385 369h2v1h-2zM393 386h2v2h-2zM320 438h6v2h-6zM430 439h4v2h-4zM453 435h12v2h-12zM372 519h1v2h-1z"/>
<path fill="#0080ff" d="M193 131h5v1h-5zM197 124h1v14h-1zM206 115h1v4h-1zM206 130h1v2h-1zM206 131h5v1h-5zM206 143h1v3h-1zM210 124h1v14h-1zM219 115h1v4h-1zM219 130h1v2h-1zM219 131h5v1h-5zM219 143h1v3h-1zM223 124h1v14h-1zM232 115h1v4h-1zM232 130h1v2h-1zM232 131h5v1h-5zM232 143h1v3h-1zM223 124h1v14h-1zM232 131h7v1h-7zM193 168h5v1h-5zM197 161h1v14h-1zM206 152h1v4h-1zM206 167h1v2h-1zM206 168h5v1h-5zM206 180h1v3h-1zM210 161h1v14h-1zM219 152h1v4h-1zM219 167h1v2h-1zM219 168h5v1h-5zM219 180h1v3h-1zM223 161h1v14h-1zM232 152h1v4h-1zM232 167h1v2h-1zM232 168h5v1h-5zM232 180h1v3h-1zM223 161h1v14h-1zM232 168h7v1h-7zM193 205h5v1h-5zM197 198h1v14h-1zM206 189h1v4h-1zM206 204h1v2h-1zM206 205h5v1h-5zM206 217h1v3h-1zM210 198h1v14h-1zM219 189h1v4h-1zM219 204h1v2h-1zM219 205h5v1h-5zM219 217h1v3h-1zM223 198h1v14h-1zM232 189h1v4h-1zM232 204h1v2h-1zM232 205h5v1h-5zM232 217h1v3h-1zM223 198h1v14h-1zM232 205h7v1h-7zM193 243h5v1h-5zM197 236h1v14h-1zM206 227h1v4h-1zM206 242h1v2h-1zM206 243h5v1h-5zM206 255h1v3h-1zM210 236h1v14h-1zM219 227h1v4h-1zM219 242h1v2h-1zM219 243h5v1h-5zM219 255h1v3h-1zM223 236h1v14h-1zM232 227h1v4h-1zM232 242h1v2h-1zM232 243h5v1h-5zM232 255h1v3h-1zM223 236h1v14h-1zM232 243h7v1h-7zM193 280h5v1h-5zM197 273h1v14h-1zM206 264h1v4h-1zM206 279h1v2h-1zM206 280h5v1h-5zM206 292h1v3h-1zM210 273h1v14h-1zM219 264h1v4h-1zM219 279h1v2h-1zM219 280h5v1h-5zM219 292h1v3h-1zM223 273h1v14h-1zM232 264h1v4h-1zM232 279h1v2h-1zM232 280h5v1h-5zM232 292h1v3h-1zM223 273h1v14h-1zM232 280h7v1h-7zM193 317h5v1h-5zM197 310h1v14h-1zM206 301h1v4h-1zM206 316h1v2h-1zM206 317h5v1h-5zM206 329h1v3h-1zM210 310h1v14h-1zM219 301h1v4h-1zM219 316h1v2h-1zM219 317h5v1h-5zM219 329h1v3h-1zM223 310h1v14h-1zM232 301h1v4h-1zM232 316h1v2h-1zM232 317h5v1h-5zM232 329h1v3h-1zM223 310h1v14h-1zM232 317h7v1h-7zM193 354h5v1h-5zM197 347h1v14h-1zM206 338h1v4h-1zM206 353h1v2h-1zM206 354h5v1h-5zM206 366h1v3h-1zM210 347h1v14h-1zM219 338h1v4h-1zM219 353h1v2h-1zM219 354h5v1h-5zM219 366h1v3h-1zM223 347h1v14h-1zM232 338h1v4h-1zM232 353h1v2h-1zM232 354h5v1h-5zM232 366h1v3h-1zM223 347h1v14h-1zM232 354h7v1h-7zM193 391h5v1h-5zM197 384h1v14h-1zM206 375h1v4h-1zM206 390h1v2h-1zM206 391h5v1h-5zM206 403h1v3h-1zM210 384h1v14h-1zM219 375h1v4h-1zM219 390h1v2h-1zM219 391h5v1h-5zM219 403h1v3h-1zM223 384h1v14h-1zM232 375h1v4h-1zM232 390h1v2h-1zM232 391h5v1h-5zM232 403h1v3h-1zM223 384h1v14h-1zM232 391h7v1h-7zM193 429h5v1h-5zM197 422h1v14h-1zM206 413h1v4h-1zM206 428h1v2h-1zM206 429h5v1h-5zM206 441h1v3h-1zM210 422h1v14h-1zM219 413h1v4h-1zM219 428h1v2h-1zM219 429h5v1h-5zM219 441h1v3h-1zM223 422h1v14h-1zM232 413h1v4h-1zM232 428h1v2h-1zM232 429h5v1h-5zM232 441h1v3h-1zM223 422h1v14h-1zM232 429h7v1h-7zM193 466h5v1h-5zM197 459h1v14h-1zM206 450h1v4h-1zM206 465h1v2h-1zM206 466h5v1h-5zM206 478h1v3h-1zM210 459h1v14h-1zM219 450h1v4h-1zM219 465h1v2h-1zM219 466h5v1h-5zM219 478h1v3h-1zM223 459h1v14h-1zM232 450h1v4h-1zM232 465h1v2h-1zM232 466h5v1h-5zM232 478h1v3h-1zM223 459h1v14h-1zM232 466h7v1h-7zM193 503h5v1h-5zM197 496h1v14h-1zM206 487h1v4h-1zM206 502h1v2h-1zM206 503h5v1h-5zM206 515h1v3h-1zM210 496h1v14h-1zM219 487h1v4h-1zM219 502h1v2h-1zM219 503h5v1h-5zM219 515h1v3h-1zM223 496h1v14h-1zM232 487h1v4h-1zM232 502h1v2h-1zM232 503h5v1h-5zM232 515h1v3h-1zM223 496h1v14h-1zM232 503h7v1h-7zM251 100h1v422h-1zM280 294h194v1h-194zM473 294h1v131h-1zM429 424h45v1h-45zM280 294h1v56h-1zM274 349h7v1h-7zM274 338h1v14h-1zM319 307h1v4h-1zM305 314h7v1h-7zM305 314h1v16h-1zM319 320h1v5h-1zM320 321h12v1h-12zM298 329h14v1h-14zM354 303h1v10h-1zM354 306h86v1h-86zM362 306h1v32h-1zM345 318h1v8h-1zM345 318h5v1h-5zM345 325h10v1h-10zM354 324h1v14h-1zM375 314h5v1h-5zM378 314h1v7h-1zM378 320h9v1h-9zM386 306h1v3h-1zM391 314h1v7h-1zM391 327h1v8h-1zM391 320h60v1h-60zM405 314h1v7h-1zM405 314h7v1h-7zM375 327h5v1h-5zM378 327h1v8h-1zM378 334h9v1h-9zM391 334h21v1h-21zM386 320h1v4h-1zM399 320h1v4h-1zM367 320h1v3h-1zM341 337h39v1h-39zM345 337h1v5h-1zM358 337h1v5h-1zM379 337h1v5h-1zM362 336h6v1h-6zM367 330h1v8h-1zM399 334h1v10h-1zM367 348h25v1h-25zM376 348h1v8h-1zM375 355h4v1h-4zM386 347h1v6h-1zM354 348h1v6h-1zM345 349h10v1h-10zM345 349h1v7h-1zM367 348h1v4h-1zM406 314h1v7h-1zM406 314h5v1h-5zM419 306h1v4h-1zM432 314h1v7h-1zM439 306h1v4h-1zM419 320h1v9h-1zM420 324h31v1h-31zM439 320h1v7h-1zM405 334h7v1h-7zM432 331h1v8h-1zM432 338h8v1h-8zM439 341h1v7h-1zM419 341h1v8h-1zM419 348h9v1h-9zM427 348h1v5h-1zM427 352h6v1h-6zM439 358h12v1h-12zM439 358h1v4h-1zM419 360h1v5h-1zM427 361h1v7h-1zM427 367h6v1h-6zM419 361h32v1h-32zM419 373h1v4h-1zM439 373h1v4h-1zM354 361h1v9h-1zM367 361h1v9h-1zM386 361h1v2h-1zM337 388h106v1h-106zM337 388h1v40h-1zM337 426h30v1h-30zM354 388h1v76h-1zM366 388h1v8h-1zM366 400h1v22h-1zM366 404h12v1h-12zM377 397h1v8h-1zM377 397h14v1h-14zM366 432h1v5h-1zM393 432h1v5h-1zM367 437h5v1h-5zM372 438h4v1h-4zM376 439h8v2h-8zM384 438h5v1h-5zM389 437h4v1h-4zM367 442h5v1h-5zM372 441h4v1h-4zM384 441h5v1h-5zM389 442h4v1h-4zM366 443h1v10h-1zM393 443h1v10h-1zM328 432h1v15h-1zM280 440h49v1h-49zM328 446h22v1h-22zM393 388h1v6h-1zM406 388h1v73h-1zM414 388h1v18h-1zM432 388h1v6h-1zM442 388h1v82h-1zM393 403h44v1h-44zM393 403h1v19h-1zM400 426h15v1h-15zM414 446h11v1h-11zM424 432h1v15h-1zM424 440h7v1h-7zM429 424h1v17h-1zM442 437h68v1h-68zM481 437h1v85h-1zM251 521h231v1h-231zM280 440h1v82h-1zM366 452h1v22h-1zM366 473h13v1h-13zM378 473h1v9h-1zM378 480h8v1h-8zM393 452h1v24h-1zM393 474h44v1h-44zM354 470h1v7h-1zM354 483h1v5h-1zM406 470h1v7h-1zM406 483h1v5h-1zM418 474h1v18h-1zM431 474h1v7h-1zM418 483h10v1h-10zM423 440h8v1h-8zM323 399h6v1h-6zM323 412h6v1h-6zM395 396h5v1h-5zM421 396h5v1h-5zM354 453h7v1h-7zM339 467h8v1h-8zM339 480h8v1h-8zM416 467h8v1h-8zM406 497h5v1h-5z"/>
<path fill="#ffffff" d="M320 126h1v6h-1zM320 135h1v6h-1zM313 133h6v1h-6zM322 133h6v1h-6zM250 531h1v13h-1zM244 537h13v1h-13zM249 534h1v1h-1zM251 534h1v1h-1zM248 535h1v1h-1zM252 535h1v1h-1zM247 536h1v1h-1zM253 536h1v1h-1zM247 538h1v1h-1zM253 538h1v1h-1zM248 539h1v1h-1zM252 539h1v1h-1zM249 540h1v1h-1zM251 540h1v1h-1z"/>
</g></svg><!--/CANVAS-->

<!--ICONS--><svg class="a" style="left:0;top:0" width="800" height="600" shape-rendering="crispEdges"><rect x="2" y="1" width="16" height="16" fill="#000"/>
<rect x="3" y="2" width="14" height="14" fill="#c0c0c0"/>
<rect x="3" y="2" width="14" height="1" fill="#dfdfdf"/>
<rect x="3" y="2" width="1" height="14" fill="#dfdfdf"/>
<rect x="7" y="3" width="7" height="5" fill="#ff0000"/>
<rect x="7" y="9" width="7" height="6" fill="#00ff00"/>
<rect x="8" y="4" width="5" height="1" fill="#000"/>
<rect x="10" y="3" width="1" height="1" fill="#000"/>
<rect x="8" y="13" width="5" height="1" fill="#000"/>
<rect x="10" y="14" width="1" height="1" fill="#000"/>
<rect x="5" y="6" width="10" height="1" fill="#000"/>
<rect x="5" y="11" width="10" height="1" fill="#000"/>
<rect x="5" y="6" width="1" height="6" fill="#000"/>
<rect x="8" y="8" width="5" height="2" fill="#000"/>
<rect x="160" y="46" width="7" height="5" fill="#ff0000"/>
<rect x="160" y="52" width="7" height="6" fill="#00ff00"/>
<rect x="161" y="47" width="5" height="1" fill="#000"/>
<rect x="163" y="46" width="1" height="1" fill="#000"/>
<rect x="161" y="56" width="5" height="1" fill="#000"/>
<rect x="163" y="57" width="1" height="1" fill="#000"/>
<rect x="158" y="49" width="10" height="1" fill="#000"/>
<rect x="158" y="54" width="10" height="1" fill="#000"/>
<rect x="158" y="49" width="1" height="6" fill="#000"/>
<rect x="161" y="51" width="5" height="2" fill="#000"/>
<rect x="752" y="11" width="6" height="2" fill="#000"/>
<rect x="768" y="4" width="7" height="2" fill="#000"/>
<rect x="774" y="6" width="1" height="4" fill="#000"/>
<rect x="773" y="9" width="1" height="1" fill="#000"/>
<rect x="766" y="7" width="7" height="2" fill="#000"/>
<rect x="766" y="9" width="1" height="4" fill="#000"/>
<rect x="772" y="9" width="1" height="4" fill="#000"/>
<rect x="766" y="12" width="7" height="1" fill="#000"/>
<rect x="786" y="5" width="2" height="1" fill="#000"/>
<rect x="793" y="5" width="2" height="1" fill="#000"/>
<rect x="787" y="6" width="2" height="1" fill="#000"/>
<rect x="792" y="6" width="2" height="1" fill="#000"/>
<rect x="788" y="7" width="2" height="1" fill="#000"/>
<rect x="791" y="7" width="2" height="1" fill="#000"/>
<rect x="789" y="8" width="2" height="1" fill="#000"/>
<rect x="790" y="8" width="2" height="1" fill="#000"/>
<rect x="790" y="9" width="2" height="1" fill="#000"/>
<rect x="789" y="9" width="2" height="1" fill="#000"/>
<rect x="791" y="10" width="2" height="1" fill="#000"/>
<rect x="788" y="10" width="2" height="1" fill="#000"/>
<rect x="792" y="11" width="2" height="1" fill="#000"/>
<rect x="787" y="11" width="2" height="1" fill="#000"/>
<rect x="793" y="12" width="2" height="1" fill="#000"/>
<rect x="786" y="12" width="2" height="1" fill="#000"/>
<rect x="23" y="46" width="5" height="1" fill="#000"/>
<rect x="22" y="47" width="1" height="1" fill="#000"/>
<rect x="23" y="47" width="5" height="1" fill="#ffff00"/>
<rect x="28" y="47" width="1" height="1" fill="#000"/>
<rect x="21" y="48" width="1" height="1" fill="#000"/>
<rect x="22" y="48" width="7" height="1" fill="#ffff00"/>
<rect x="29" y="48" width="1" height="1" fill="#000"/>
<rect x="20" y="49" width="1" height="1" fill="#000"/>
<rect x="21" y="49" width="2" height="1" fill="#ffff00"/>
<rect x="23" y="49" width="1" height="1" fill="#000"/>
<rect x="27" y="49" width="1" height="1" fill="#000"/>
<rect x="28" y="49" width="2" height="1" fill="#ffff00"/>
<rect x="30" y="49" width="1" height="1" fill="#000"/>
<rect x="20" y="50" width="1" height="1" fill="#000"/>
<rect x="21" y="50" width="2" height="1" fill="#ffff00"/>
<rect x="23" y="50" width="1" height="1" fill="#000"/>
<rect x="27" y="50" width="1" height="1" fill="#000"/>
<rect x="28" y="50" width="2" height="1" fill="#ffff00"/>
<rect x="30" y="50" width="1" height="1" fill="#000"/>
<rect x="21" y="51" width="2" height="1" fill="#000"/>
<rect x="26" y="51" width="1" height="1" fill="#000"/>
<rect x="27" y="51" width="2" height="1" fill="#ffff00"/>
<rect x="29" y="51" width="1" height="1" fill="#000"/>
<rect x="24" y="52" width="1" height="1" fill="#000"/>
<rect x="25" y="52" width="3" height="1" fill="#ffff00"/>
<rect x="28" y="52" width="1" height="1" fill="#000"/>
<rect x="23" y="53" width="1" height="1" fill="#000"/>
<rect x="24" y="53" width="2" height="1" fill="#ffff00"/>
<rect x="26" y="53" width="2" height="1" fill="#000"/>
<rect x="23" y="54" width="1" height="1" fill="#000"/>
<rect x="24" y="54" width="2" height="1" fill="#ffff00"/>
<rect x="26" y="54" width="1" height="1" fill="#000"/>
<rect x="24" y="55" width="2" height="1" fill="#000"/>
<rect x="23" y="56" width="4" height="1" fill="#000"/>
<rect x="23" y="57" width="1" height="1" fill="#000"/>
<rect x="24" y="57" width="2" height="1" fill="#ffff00"/>
<rect x="26" y="57" width="1" height="1" fill="#000"/>
<rect x="23" y="58" width="1" height="1" fill="#000"/>
<rect x="24" y="58" width="2" height="1" fill="#ffff00"/>
<rect x="26" y="58" width="1" height="1" fill="#000"/>
<rect x="24" y="59" width="2" height="1" fill="#000"/>
<rect x="42" y="52" width="5" height="5" fill="#000"/>
<rect x="43" y="53" width="3" height="3" fill="#00ffff"/>
<rect x="49" y="52" width="5" height="5" fill="#000"/>
<rect x="50" y="53" width="3" height="3" fill="#00ffff"/>
<rect x="42" y="52" width="1" height="1" fill="#c0c0c0"/>
<rect x="46" y="52" width="1" height="1" fill="#c0c0c0"/>
<rect x="42" y="56" width="1" height="1" fill="#c0c0c0"/>
<rect x="46" y="56" width="1" height="1" fill="#c0c0c0"/>
<rect x="49" y="52" width="1" height="1" fill="#c0c0c0"/>
<rect x="53" y="52" width="1" height="1" fill="#c0c0c0"/>
<rect x="49" y="56" width="1" height="1" fill="#c0c0c0"/>
<rect x="53" y="56" width="1" height="1" fill="#c0c0c0"/>
<rect x="47" y="52" width="2" height="1" fill="#000"/>
<rect x="44" y="51" width="1" height="1" fill="#000"/>
<rect x="45" y="50" width="1" height="1" fill="#000"/>
<rect x="46" y="49" width="1" height="1" fill="#000"/>
<rect x="47" y="48" width="1" height="1" fill="#000"/>
<rect x="48" y="48" width="1" height="1" fill="#000"/>
<rect x="49" y="49" width="1" height="1" fill="#000"/>
<rect x="49" y="50" width="1" height="1" fill="#000"/>
<rect x="53" y="51" width="1" height="1" fill="#000"/>
<rect x="54" y="50" width="1" height="1" fill="#000"/>
<rect x="55" y="49" width="1" height="1" fill="#000"/>
<rect x="56" y="48" width="1" height="1" fill="#000"/>
<rect x="57" y="48" width="1" height="1" fill="#000"/>
<rect x="58" y="49" width="1" height="1" fill="#000"/>
<rect x="71" y="46" width="11" height="1" fill="#000"/>
<rect x="70" y="47" width="1" height="1" fill="#000"/>
<rect x="71" y="47" width="9" height="1" fill="#fff"/>
<rect x="80" y="47" width="1" height="1" fill="#000"/>
<rect x="69" y="48" width="1" height="1" fill="#000"/>
<rect x="70" y="48" width="9" height="1" fill="#fff"/>
<rect x="79" y="48" width="1" height="1" fill="#000"/>
<rect x="67" y="49" width="13" height="1" fill="#000"/>
<rect x="67" y="50" width="1" height="6" fill="#000"/>
<rect x="68" y="50" width="11" height="6" fill="#c0c0c0"/>
<rect x="79" y="49" width="1" height="8" fill="#000"/>
<rect x="80" y="48" width="1" height="8" fill="#fff"/>
<rect x="81" y="47" width="1" height="8" fill="#000"/>
<rect x="80" y="55" width="1" height="1" fill="#000"/>
<rect x="73" y="51" width="2" height="2" fill="#00ff00"/>
<rect x="76" y="51" width="2" height="2" fill="#00ff00"/>
<rect x="67" y="56" width="13" height="1" fill="#000"/>
<rect x="68" y="57" width="1" height="1" fill="#000"/>
<rect x="69" y="57" width="8" height="1" fill="#fff"/>
<rect x="77" y="57" width="1" height="1" fill="#000"/>
<rect x="66" y="58" width="2" height="1" fill="#000"/>
<rect x="68" y="58" width="8" height="1" fill="#fff"/>
<rect x="76" y="58" width="1" height="1" fill="#000"/>
<rect x="65" y="59" width="11" height="1" fill="#000"/>
<rect x="103" y="45" width="19" height="15" fill="#000"/>
<rect x="104" y="46" width="17" height="13" fill="#dfdfdf"/>
<rect x="106" y="47" width="13" height="3" fill="#000"/>
<rect x="107" y="48" width="2" height="1" fill="#fff"/>
<rect x="110" y="48" width="2" height="1" fill="#fff"/>
<rect x="113" y="48" width="2" height="1" fill="#fff"/>
<rect x="116" y="48" width="2" height="1" fill="#fff"/>
<rect x="106" y="51" width="8" height="7" fill="#000"/>
<rect x="107" y="52" width="6" height="5" fill="#c0c0c0"/>
<rect x="107" y="52" width="6" height="1" fill="#dfdfdf"/>
<rect x="115" y="51" width="4" height="7" fill="#000"/>
<rect x="116" y="52" width="2" height="1" fill="#fff"/>
<rect x="116" y="54" width="2" height="1" fill="#fff"/>
<rect x="116" y="56" width="2" height="1" fill="#fff"/>
<rect x="135" y="45" width="5" height="1" fill="#000"/>
<rect x="134" y="46" width="7" height="1" fill="#000"/>
<rect x="135" y="46" width="5" height="1" fill="#00ffff"/>
<rect x="133" y="47" width="9" height="1" fill="#000"/>
<rect x="134" y="47" width="7" height="1" fill="#00ffff"/>
<rect x="132" y="48" width="11" height="7" fill="#000"/>
<rect x="133" y="48" width="9" height="4" fill="#00ffff"/>
<rect x="137" y="49" width="1" height="1" fill="#000"/>
<rect x="133" y="52" width="1" height="1" fill="#00ffff"/>
<rect x="135" y="52" width="5" height="1" fill="#00ffff"/>
<rect x="141" y="52" width="1" height="1" fill="#00ffff"/>
<rect x="134" y="53" width="1" height="1" fill="#00ffff"/>
<rect x="140" y="53" width="1" height="1" fill="#00ffff"/>
<rect x="135" y="54" width="5" height="1" fill="#00ffff"/>
<rect x="132" y="54" width="1" height="1" fill="#c0c0c0"/>
<rect x="142" y="54" width="1" height="1" fill="#c0c0c0"/>
<rect x="133" y="55" width="9" height="1" fill="#000"/>
<rect x="133" y="55" width="1" height="1" fill="#c0c0c0"/>
<rect x="141" y="55" width="1" height="1" fill="#c0c0c0"/>
<rect x="134" y="56" width="7" height="1" fill="#000"/>
<rect x="142" y="54" width="4" height="1" fill="#000"/>
<rect x="142" y="55" width="3" height="1" fill="#000"/>
<rect x="142" y="56" width="4" height="1" fill="#000"/>
<rect x="142" y="57" width="1" height="1" fill="#000"/>
<rect x="144" y="57" width="3" height="1" fill="#000"/>
<rect x="145" y="58" width="3" height="1" fill="#000"/>
<rect x="146" y="59" width="2" height="1" fill="#000"/>
<rect x="183" y="45" width="15" height="15" fill="#000"/>
<rect x="184" y="46" width="13" height="13" fill="#fff"/>
<rect x="186" y="47" width="9" height="1" fill="#000"/>
<rect x="186" y="49" width="9" height="1" fill="#000"/>
<rect x="186" y="51" width="9" height="1" fill="#000"/>
<rect x="186" y="53" width="9" height="1" fill="#000"/>
<rect x="186" y="55" width="9" height="1" fill="#000"/>
<rect x="186" y="57" width="9" height="1" fill="#000"/>
<rect x="211" y="52" width="5" height="1" fill="#000"/>
<path d="M210 52.5 L213 49.5 L213 55.5 Z" fill="#000" stroke="none" stroke-width="1" />
<path d="M216 48 L225 57 M225 48 L216 57" fill="none" stroke="#0000ff" stroke-width="1.8" />
<path d="M247.5 52.5 L251 49 L251 51 L258.5 51 L258.5 54 L251 54 L251 56 Z" fill="#fff" stroke="#000" stroke-width="1.2" />
<path d="M278 46.5 L281.5 50 L279.5 50 L279.5 58.5 L276.5 58.5 L276.5 50 L274.5 50 Z" fill="#fff" stroke="#000" stroke-width="1.2" />
<path d="M302 58.5 L305.5 55 L303.5 55 L303.5 46.5 L300.5 46.5 L300.5 55 L298.5 55 Z" fill="#fff" stroke="#000" stroke-width="1.2" />
<path d="M332.5 52.5 L329 49 L329 51 L321.5 51 L321.5 54 L329 54 L329 56 Z" fill="#fff" stroke="#000" stroke-width="1.2" />
<rect x="354" y="45" width="15" height="15" fill="#000"/>
<rect x="355" y="46" width="13" height="13" fill="#fff"/>
<rect x="378" y="45" width="15" height="15" fill="#000"/>
<rect x="379" y="46" width="13" height="13" fill="#fff"/>
<rect x="402" y="45" width="15" height="15" fill="#000"/>
<rect x="403" y="46" width="13" height="13" fill="#fff"/>
<rect x="361" y="46" width="1" height="4" fill="#000"/>
<rect x="360" y="47" width="3" height="1" fill="#000"/>
<rect x="359" y="48" width="5" height="1" fill="#000"/>
<rect x="361" y="55" width="1" height="4" fill="#000"/>
<rect x="359" y="56" width="5" height="1" fill="#000"/>
<rect x="360" y="57" width="3" height="1" fill="#000"/>
<rect x="355" y="52" width="4" height="1" fill="#000"/>
<rect x="356" y="51" width="1" height="3" fill="#000"/>
<rect x="357" y="50" width="1" height="5" fill="#000"/>
<rect x="365" y="52" width="4" height="1" fill="#000"/>
<rect x="367" y="51" width="1" height="3" fill="#000"/>
<rect x="366" y="50" width="1" height="5" fill="#000"/>
<rect x="385" y="52" width="1" height="1" fill="#000"/>
<rect x="384" y="52" width="3" height="1" fill="#000"/>
<rect x="385" y="51" width="1" height="3" fill="#000"/>
<rect x="404" y="47" width="4" height="1" fill="#000"/>
<rect x="404" y="48" width="3" height="1" fill="#000"/>
<rect x="404" y="49" width="2" height="1" fill="#000"/>
<rect x="404" y="50" width="1" height="1" fill="#000"/>
<rect x="411" y="47" width="4" height="1" fill="#000"/>
<rect x="412" y="48" width="3" height="1" fill="#000"/>
<rect x="413" y="49" width="2" height="1" fill="#000"/>
<rect x="414" y="50" width="1" height="1" fill="#000"/>
<rect x="404" y="57" width="4" height="1" fill="#000"/>
<rect x="404" y="56" width="3" height="1" fill="#000"/>
<rect x="404" y="55" width="2" height="1" fill="#000"/>
<rect x="404" y="54" width="1" height="1" fill="#000"/>
<rect x="411" y="57" width="4" height="1" fill="#000"/>
<rect x="412" y="56" width="3" height="1" fill="#000"/>
<rect x="413" y="55" width="2" height="1" fill="#000"/>
<rect x="414" y="54" width="1" height="1" fill="#000"/>
<rect x="406" y="49" width="1" height="1" fill="#000"/>
<rect x="412" y="49" width="1" height="1" fill="#000"/>
<rect x="407" y="50" width="1" height="1" fill="#000"/>
<rect x="411" y="50" width="1" height="1" fill="#000"/>
<rect x="408" y="51" width="1" height="1" fill="#000"/>
<rect x="410" y="51" width="1" height="1" fill="#000"/>
<rect x="409" y="52" width="1" height="1" fill="#000"/>
<rect x="409" y="52" width="1" height="1" fill="#000"/>
<rect x="410" y="53" width="1" height="1" fill="#000"/>
<rect x="408" y="53" width="1" height="1" fill="#000"/>
<rect x="411" y="54" width="1" height="1" fill="#000"/>
<rect x="407" y="54" width="1" height="1" fill="#000"/>
<rect x="412" y="55" width="1" height="1" fill="#000"/>
<rect x="406" y="55" width="1" height="1" fill="#000"/>
<rect x="430" y="49" width="7" height="7" fill="#000"/>
<rect x="431" y="50" width="5" height="5" fill="#fff"/>
<path d="M433.5 49 L431 46 L436 46 Z M433.5 56 L431 59 L436 59 Z M430 52.5 L427 50 L427 55 Z M437 52.5 L440 50 L440 55 Z" fill="#000" stroke="none" stroke-width="1" />
<rect x="433" y="44" width="1" height="3" fill="#000"/>
<rect x="433" y="58" width="1" height="3" fill="#000"/>
<rect x="425" y="52" width="3" height="1" fill="#000"/>
<rect x="439" y="52" width="3" height="1" fill="#000"/>
<rect x="450" y="48" width="9" height="9" fill="#000"/>
<rect x="451" y="49" width="7" height="7" fill="#fff"/>
<rect x="460" y="52" width="5" height="1" fill="#000"/>
<path d="M459.5 52.5 L462 50 L462 55 Z" fill="#000" stroke="none" stroke-width="1" />
<path d="M493 58 L494 54 L499 49 L502 52 L497 57 Z" fill="#000" stroke="none" stroke-width="1" />
<path d="M495 54.5 L498.5 51 L500 52.5 L496.5 56 Z" fill="#ffff00" stroke="none" stroke-width="1" />
<path d="M498.5 49.5 L500 48 L502.5 50.5 L501 52 Z" fill="#0000ff" stroke="none" stroke-width="1" />
</svg><!--/ICONS-->
<!-- right panel -->
<div class="btn" style="left:710px;top:49px;width:80px;height:26px;line-height:27px">Menu 1</div>
<div class="btn rb" style="left:710px;top:78px">lDrw</div>
<div class="btn rb" style="left:752px;top:78px">sDrw</div>
<div class="btn rb" style="left:710px;top:99px">Info</div>
<div class="btn rb" style="left:752px;top:99px">Show</div>
<div class="btn rb" style="left:710px;top:120px">Attr</div>
<div class="btn rb" style="left:752px;top:120px">Arc</div>
<div class="btn rb" style="left:710px;top:141px">Sort</div>
<div class="btn rb" style="left:752px;top:141px">Font</div>
<div class="btn rb" style="left:710px;top:163px">cCel</div>
<div class="btn rb" style="left:752px;top:163px">cSiz</div>
<div class="btn rb" style="left:710px;top:184px">cLyr</div>
<div class="btn rb" style="left:752px;top:184px">cWth</div>
<div class="btn rb" style="left:710px;top:205px">Layr</div>
<div class="btn rb" style="left:752px;top:205px">Wdth</div>
<div class="btn rb" style="left:710px;top:226px">sWin</div>
<div class="btn rb" style="left:752px;top:226px">rWin</div>
<div class="btn rb" style="left:710px;top:247px">Cmd</div>
<div class="btn rb prs" style="left:752px;top:247px">Grid</div>
<div class="btn rb" style="left:710px;top:268px">wGrd</div>
<div class="btn rb" style="left:752px;top:268px">dGrd</div>
<div class="btn rb" style="left:710px;top:289px">View</div>
<div class="btn rb" style="left:752px;top:289px">Open</div>
<div class="btn rb" style="left:710px;top:310px">Obj</div>
<div class="btn rb" style="left:752px;top:310px">Text</div>
<div class="btn rb" style="left:710px;top:332px">Add</div>
<div class="btn rb" style="left:752px;top:332px">Del</div>
<div class="btn rb" style="left:710px;top:353px">Get</div>
<div class="btn rb" style="left:752px;top:353px">Put</div>
<div class="btn rb" style="left:710px;top:374px">fGet</div>
<div class="btn rb" style="left:752px;top:374px">fPut</div>
<div class="btn rb" style="left:710px;top:395px">cGet</div>
<div class="btn rb" style="left:752px;top:395px">cPut</div>
<div class="btn rb" style="left:710px;top:416px">tGet</div>
<div class="btn rb" style="left:752px;top:416px">tPut</div>
<div class="btn rb" style="left:710px;top:437px">aPut</div>
<div class="btn rb" style="left:752px;top:437px">wGet</div>
<div class="btn rb" style="left:710px;top:458px">qMov</div>
<div class="btn rb" style="left:752px;top:458px">cMov</div>
<div class="btn rb" style="left:710px;top:480px">Mov</div>
<div class="btn rb" style="left:752px;top:480px">vStp</div>
<div class="btn rb" style="left:710px;top:501px">Cpy</div>
<div class="btn rb" style="left:752px;top:501px">pRev</div>
<div class="btn rb" style="left:710px;top:522px">pBeg</div>
<div class="btn rb" style="left:752px;top:522px">pEnd</div>
<div class="btn rb" style="left:710px;top:543px">Cut</div>
<div class="btn rb" style="left:752px;top:543px">Join</div>

<div class="sm smr" style="left:520px">W</div>
<div class="sm smp" style="left:538px">U</div>
<div class="sm smp" style="left:556px">C</div>
<div class="sm smp" style="left:574px">D</div>
<div class="sm smi" style="left:592px">I</div>
<div class="sm smp" style="left:610px">N</div>
<div class="sm smp" style="left:628px">O</div>
<div class="sm smp" style="left:646px">R</div>
<div class="sm smr" style="left:664px">T</div>
<div class="sm smr" style="left:682px">V</div>
<!-- status -->
<div class="sb" style="left:6px;top:559px;width:72px;height:16px">Get (Pt.1)</div>
<div class="sb" style="left:82px;top:559px;width:128px;height:16px;padding-left:3px">x=211.15  y=1228</div>
<div class="sb" style="left:214px;top:559px;width:300px;height:16px">Using Layer Table</div>
<div class="sb" style="left:6px;top:577px;width:347px;height:16px;word-spacing:-1px;letter-spacing:-0.1px;padding-left:3px">wGrd=1um  dGrd=1um  Obj=POLY  Layr=MET1</div>
<div class="sb" style="left:357px;top:577px;width:347px;height:16px;word-spacing:-0.5px">17 Cells  0 Boxes  80 Paths  168 Vtx</div>
</body></html>
